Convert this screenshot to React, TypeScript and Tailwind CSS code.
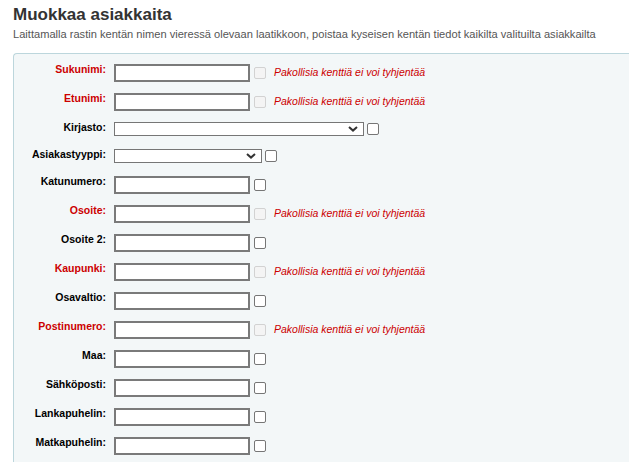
import React from "react";

type Field = {
  label: string;
  required?: boolean;
  kind?: "text" | "select";
  width?: number;
};

const fields: Field[] = [
  { label: "Sukunimi:", required: true },
  { label: "Etunimi:", required: true },
  { label: "Kirjasto:", kind: "select", width: 250 },
  { label: "Asiakastyyppi:", kind: "select", width: 148 },
  { label: "Katunumero:" },
  { label: "Osoite:", required: true },
  { label: "Osoite 2:" },
  { label: "Kaupunki:", required: true },
  { label: "Osavaltio:" },
  { label: "Postinumero:", required: true },
  { label: "Maa:" },
  { label: "Sähköposti:" },
  { label: "Lankapuhelin:" },
  { label: "Matkapuhelin:" },
];

function Chevron() {
  return (
    <svg width="10" height="6" viewBox="0 0 10 6" className="shrink-0">
      <path d="M1 1 L5 4.6 L9 1" fill="none" stroke="#333" strokeWidth="2" />
    </svg>
  );
}

function Row({ f }: { f: Field }) {
  const isSelect = f.kind === "select";
  return (
    <div className={`flex items-start pt-[5px] ${isSelect ? "h-[27px]" : "h-[29px]"}`}>
      <label
        className={`w-[92px] mr-[8px] text-right font-bold text-[10.5px] leading-[11px] ${
          f.required ? "text-[#cc0000]" : "text-black"
        }`}
      >
        {f.label}
      </label>
      {isSelect ? (
        <div className="flex items-center h-[14px]">
          <div
            className="flex items-center justify-end h-[14px] bg-white border border-[#767676] pr-[5px]"
            style={{ width: f.width }}
          >
            <Chevron />
          </div>
          <span className="ml-[3px] w-[12px] h-[12px] rounded-[2px] border border-[#767676] bg-white" />
        </div>
      ) : (
        <div className="flex items-center h-[18px]">
          <input
            type="text"
            readOnly
            className="w-[136px] h-[18px] bg-white border-2 border-[#7a7a7a] outline-none"
          />
          {f.required ? (
            <>
              <span className="ml-[4px] w-[12px] h-[12px] rounded-[2px] border border-[#d2d2d2] bg-[#f4f4f4]" />
              <span className="ml-[8px] italic text-[10.5px] text-[#cc0000]">
                Pakollisia kenttiä ei voi tyhjentää
              </span>
            </>
          ) : (
            <span className="ml-[4px] w-[12px] h-[12px] rounded-[2px] border border-[#767676] bg-white" />
          )}
        </div>
      )}
    </div>
  );
}

export default function App() {
  return (
    <div className="w-[629px] h-[462px] overflow-hidden bg-white font-['Liberation_Sans',Arial,sans-serif]">
      <div className="pl-[13px] pt-[5px]">
        <h1 className="text-[17px] leading-[20px] font-bold text-[#333]">Muokkaa asiakkaita</h1>
        <p className="mt-[2px] text-[11.1px] leading-[14px] text-[#555] whitespace-nowrap">
          Laittamalla rastin kentän nimen vieressä olevaan laatikkoon, poistaa kyseisen kentän tiedot kaikilta valituilta asiakkailta
        </p>
        <div className="mt-[12px] w-[700px] h-[500px] border-l border-t border-[#bcd6dc] rounded-tl-[4px] bg-[#f3f7f8] pt-[5px]">
          {fields.map((f) => (
            <Row key={f.label} f={f} />
          ))}
        </div>
      </div>
    </div>
  );
}
